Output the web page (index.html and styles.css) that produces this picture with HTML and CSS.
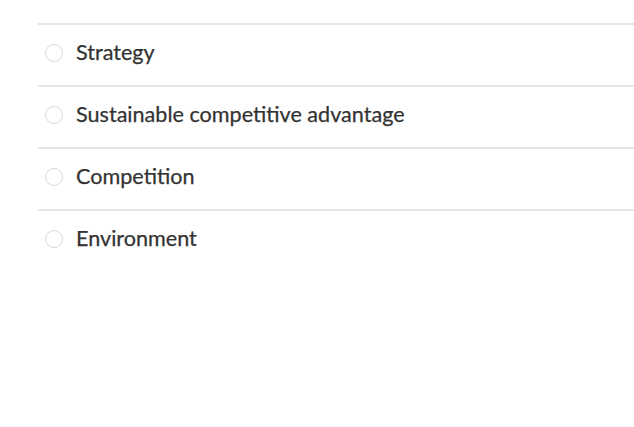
FILE: index.html
```html
<!DOCTYPE html>
<html>
<head>
<meta charset="utf-8">
<link rel="stylesheet" href="styles.css">
</head>
<body>
<ul class="options">
  <li class="option"><span class="radio"></span><span class="label">Strategy</span></li>
  <li class="option"><span class="radio"></span><span class="label">Sustainable competitive advantage</span></li>
  <li class="option"><span class="radio"></span><span class="label">Competition</span></li>
  <li class="option"><span class="radio"></span><span class="label">Environment</span></li>
</ul>
</body>
</html>
```
FILE: styles.css
```css
html, body {
  margin: 0;
  padding: 0;
  background: #ffffff;
}
body {
  font-family: Lato, "Liberation Sans", sans-serif;
  color: #333333;
}
.options {
  list-style: none;
  margin: 0;
  padding: 23px 0 0 38px;
}
.option {
  box-sizing: border-box;
  display: flex;
  align-items: center;
  gap: 13px;
  height: 62px;
  border-top: 2px solid #e6e6e6;
  padding: 0 0 5px 7px;
}
.radio {
  width: 16px;
  height: 16px;
  border: 1.5px solid #d9d9d9;
  border-radius: 50%;
  box-sizing: content-box;
  flex: none;
}
.label {
  font-size: 21.6px;
  line-height: 1;
  -webkit-text-stroke: 0.25px #333333;
}
```
